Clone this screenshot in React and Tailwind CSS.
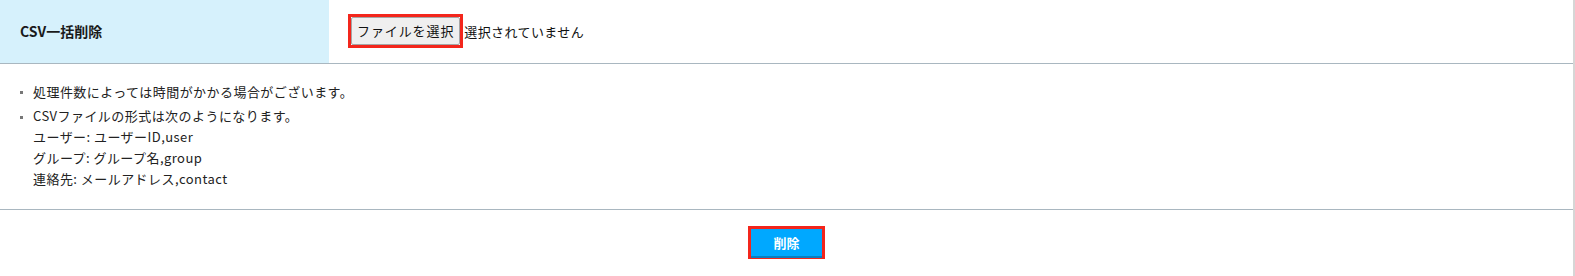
export default function App() {
  const font = { fontFamily: '"Noto Sans CJK JP", "Liberation Sans", sans-serif' }

  return (
    <div className="w-[1575px] h-[276px] bg-white text-[#222] border-r-2 border-[#d6d6d6] overflow-hidden" style={font}>
      {/* CSV upload row */}
      <div className="flex h-[64px] border-b border-[#a9b7c0]">
        <div className="w-[329px] bg-[#d6f1fc] flex items-center pl-5">
          <span className="text-[14px] font-bold text-[#1a1a1a]">CSV一括削除</span>
        </div>
        <div className="flex items-center pl-[19px]">
          <div className="border-[3px] border-[#f3261c] mb-[2px]">
            <button className="h-[28px] px-[5px] bg-[#efefef] border border-[#a6a6a6] rounded-[2px] text-[13px] tracking-[0.9px] leading-none text-[#111]">
              ファイルを選択
            </button>
          </div>
          <span className="text-[13px] tracking-[0.4px] text-[#111] ml-[1px]">選択されていません</span>
        </div>
      </div>

      {/* notes */}
      <div className="h-[146px] border-b border-[#a9b7c0] pt-[17px] pl-[20px]">
        <ul className="text-[13px] leading-[21px] tracking-[0.45px] text-[#222] space-y-[3px]">
          <li className="flex">
            <span className="w-[13px] flex items-center h-[21px]">
              <span className="w-[3px] h-[3px] bg-[#777] mt-[2px]"></span>
            </span>
            <span>処理件数によっては時間がかかる場合がございます。</span>
          </li>
          <li className="flex">
            <span className="w-[13px] flex items-start">
              <span className="w-[3px] h-[3px] bg-[#777] mt-[11px]"></span>
            </span>
            <div>
              <div>CSVファイルの形式は次のようになります。</div>
              <div>ユーザー: ユーザーID,user</div>
              <div>グループ: グループ名,group</div>
              <div>連絡先: メールアドレス,contact</div>
            </div>
          </li>
        </ul>
      </div>

      {/* action */}
      <div className="flex justify-center pt-[16px]">
        <div className="border-[3px] border-[#f3261c]">
          <button className="w-[71px] h-[27px] bg-[#00a8ff] text-white text-[13px] font-bold leading-none shadow-[0_2px_0_#0a7fc0]">
            削除
          </button>
        </div>
      </div>
    </div>
  )
}
